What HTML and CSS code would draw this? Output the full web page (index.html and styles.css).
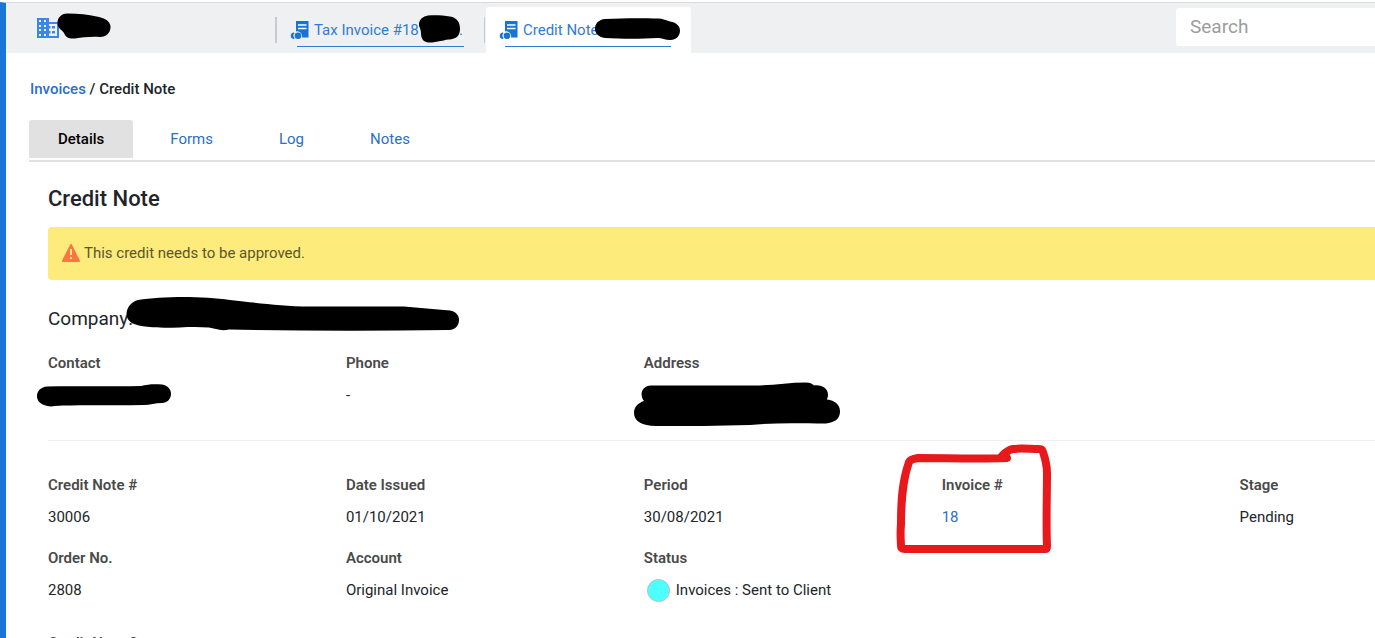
FILE: index.html
```html
<!DOCTYPE html>
<html lang="en">
<head>
    <meta charset="UTF-8">
    <meta name="viewport" content="width=device-width, initial-scale=1.0">
    <title>Credit Note</title>
    <link rel="stylesheet" href="styles.css">
</head>
<body>
    <svg width="0" height="0" class="defs" aria-hidden="true">
        <symbol id="invoice-icon" viewBox="0 0 19 19">
            <path fill="#1a73d2" d="M6 0h12.500v16.500H12a5 5 0 0 0-6-6z"/>
            <path stroke="#fff" stroke-width="1.300" d="M8 4h8.500M8 7.500h8.500"/>
            <path fill="#1a73d2" d="M3.500 11.500a3.300 3.300 0 0 0 0 6.500c.6 0 1-.3 1-1-1.500-1.500-1.500-3.500 0-4.700 0-.6-.4-.8-1-.8z"/>
            <circle cx="8" cy="14.800" r="3.300" fill="#1a73d2"/>
        </symbol>
    </svg>

    <div class="app">
        <header class="topbar">
            <a href="#" class="brand" aria-label="Company">
                <svg width="22" height="20" viewBox="0 0 22 20">
                    <path fill="#3a87e8" d="M0 0h12v4h10v16H0z"/>
                    <path fill="#eff0f2" d="M2 2h2v2H2zM7 2h2v2H7zM2 7h2v2H2zM7 7h2v2H7zM2 11h2v2H2zM7 11h2v2H7zM2 16h2v2H2zM7 16h2v2H7zM12 6h8v12h-8z"/>
                    <path fill="#3a87e8" d="M15 8h3v2.500h-3zM15 13h3v2.500h-3zM12 8h1.500v2.500H12zM12 13h1.500v2.500H12z"/>
                </svg>
                <svg class="redact redact-brand" width="54" height="27" viewBox="57 13 54 27">
                    <path d="M68 13.500C60 13 56 20 58 26c1 3 4 4 6 7 2 5 6 6 11 5.500 8-1 14-2 25-1.500 7 0 11-5 10.500-11-1-6-7-8-14-9.500-8-2-18-3-28.500-3z"/>
                </svg>
            </a>

            <nav class="open-tabs">
                <a href="#" class="open-tab">
                    <svg width="19" height="19"><use href="#invoice-icon"/></svg>
                    <span>Tax Invoice #18</span><span class="tail">.</span>
                    <svg class="redact redact-tax" width="42" height="28" viewBox="419 15 42 28">
                        <path d="M428 15.500c9-.5 15 0 22 1 7 1 10 6 10 12 0 7-3 10-10 11-5 0-9 2-18 3-8 .5-11-3-11-9 0-3-1-5-2-8-.5-5 3-9 9-10z"/>
                    </svg>
                </a>
                <a href="#" class="open-tab active">
                    <svg width="19" height="19"><use href="#invoice-icon"/></svg>
                    <span>Credit Note</span>
                    <svg class="redact redact-credit" width="86" height="24" viewBox="595 18 86 24">
                        <path d="M605 19c18-1 38-1 53-.5 5 0 8 2 12 3 7 1 10 5 10 9 0 6-5 10-10 9.500-5 0-8-2-12-2-17 1-36 1-53 0-7-1-10-5-10-9.500 0-5 4-9 10-9.500z"/>
                    </svg>
                </a>
            </nav>

            <input type="search" class="search" placeholder="Search" aria-label="Search">
        </header>

        <main>
            <div class="breadcrumb"><a href="#">Invoices</a> / Credit Note</div>

            <nav class="tabs">
                <a href="#" class="active">Details</a>
                <a href="#">Forms</a>
                <a href="#">Log</a>
                <a href="#">Notes</a>
            </nav>

            <div class="content">
                <h1>Credit Note</h1>

                <div class="alert">
                    <svg width="18" height="18" viewBox="0 0 18 18">
                        <path fill="#ff7440" stroke="#ff7440" stroke-width="2" stroke-linejoin="round" d="M9 1l8 16H1z"/>
                        <path stroke="#fdec7c" stroke-width="2" d="M9 5v6M9 13v2"/>
                    </svg>
                    This credit needs to be approved.
                </div>

                <h2>Company:
                    <svg class="redact redact-company" width="334" height="34" viewBox="126 297 334 34">
                        <path d="M138 300c25-4 65-4 92 0 28 3 50 6 80 6.500 32 0 62 0 94 0 15 1 30 3 46 4 6 1 9 5 9 9.500s-3 10-10 10c-73 1-148 1-220-.5-8 2-14-1-20-2-22-2-41 2-64-1-10-1-18-4-18.500-12 0-7 5-13 11.500-14.500z"/>
                    </svg>
                </h2>

                <dl class="fields company-fields">
                    <div class="field">
                        <dt>Contact</dt>
                        <dd>
                            <svg class="redact redact-contact" width="136" height="24" viewBox="36 383 136 24">
                                <path d="M47 386.500c30-.5 65 0 94-.5 7-2 14-2 21-1.500 6 1 9 5 9 9.500 0 5-4 9-9 9-7 0-12 2-18 2-31 1-62-.5-89 1-5 1-8 0-11-1-5-2-7-5-7-9 0-5 4-9 10-9.500z"/>
                            </svg>
                        </dd>
                    </div>
                    <div class="field">
                        <dt>Phone</dt>
                        <dd>-</dd>
                    </div>
                    <div class="field">
                        <dt>Address</dt>
                        <dd>
                            <svg class="redact redact-address" width="206" height="45" viewBox="634 382 206 45">
                                <path d="M651 385.500h104c18 0 33-3 51-3 4 0 6 1 8 3 9-1 14 4 14 9 0 3-1 4-1 5 8 1 13 5 13 12 0 8-6 11-14 12-27 0-51-1-76 1.500-32 1-62 1-94 1-14 0-22-5-22-13 0-6 4-10 10-12-5-7-2-15 7-15.500z"/>
                            </svg>
                        </dd>
                    </div>
                </dl>

                <dl class="fields">
                    <div class="field">
                        <dt>Credit Note #</dt>
                        <dd>30006</dd>
                    </div>
                    <div class="field">
                        <dt>Date Issued</dt>
                        <dd>01/10/2021</dd>
                    </div>
                    <div class="field">
                        <dt>Period</dt>
                        <dd>30/08/2021</dd>
                    </div>
                    <div class="field">
                        <dt>Invoice #</dt>
                        <dd><a href="#">18</a></dd>
                        <svg class="highlight" width="160" height="114" viewBox="894 442 160 114">
                            <path d="M1007 458c-30 1-60 0-89 0-6 1-8 2-9 4-7 20-8 40-8 62-1 10 0 19 0 22 0 2 1 3 4 3h141c1 0 1-1 1-3-1-24 0-49 0-73 0-8-2-15-4-21-1-3-2-3-5-3-8 0-17-1-25 0-6 1-8 4-12 8"/>
                        </svg>
                    </div>
                    <div class="field">
                        <dt>Stage</dt>
                        <dd>Pending</dd>
                    </div>
                    <div class="field">
                        <dt>Order No.</dt>
                        <dd>2808</dd>
                    </div>
                    <div class="field">
                        <dt>Account</dt>
                        <dd>Original Invoice</dd>
                    </div>
                    <div class="field">
                        <dt>Status</dt>
                        <dd class="status"><span class="dot"></span>Invoices : Sent to Client</dd>
                    </div>
                </dl>

                <dl class="fields comments">
                    <div class="field">
                        <dt>Credit Note Comments</dt>
                    </div>
                </dl>
            </div>
        </main>
    </div>
</body>
</html>
```
FILE: styles.css
```css
* {
    box-sizing: border-box;
}
body {
    margin: 0;
    padding-top: 2px;
    height: 100vh;
    overflow: hidden;
    font-family: Roboto, sans-serif;
    font-size: 15px;
    color: #212529;
    background: white;
}
a {
    color: #2b6fc9;
    text-decoration: none;
}
.defs {
    position: absolute;
}
.app {
    height: 100%;
    border-top: 1px solid #d8dbe0;
    border-left: 6px solid #1976d8;
    overflow: hidden;
}

/* top bar */
.topbar {
    display: flex;
    height: 50px;
    background: #eff0f2;
}
.brand {
    position: relative;
    width: 269px;
    padding: 15px 0 0 31px;
}
.open-tabs {
    display: flex;
    flex: 1;
}
.open-tab {
    position: relative;
    display: flex;
    align-items: center;
    width: 209px;
    height: 46px;
    margin-top: 4px;
    padding: 0 21px 0 15px;
    gap: 5px;
    color: #2f7cd6;
}
.open-tab::before {
    content: "";
    position: absolute;
    left: 0;
    top: 10px;
    width: 2px;
    height: 26px;
    background: #c8cacd;
}
.open-tab::after {
    content: "";
    position: absolute;
    left: 22px;
    right: 20px;
    bottom: 6px;
    border-bottom: 1px solid #2f7cd6;
}
.open-tab .tail {
    margin-left: auto;
}
.open-tab.active {
    width: 205px;
    margin-left: 2px;
    padding-left: 13px;
    background: white;
    border-radius: 3px 3px 0 0;
}
.open-tab.active::before {
    left: -2px;
    width: 1px;
}
.open-tab.active::after {
    left: 19px;
}
.search {
    width: 199px;
    height: 38px;
    margin-top: 5px;
    padding: 0 14px 2px;
    border: none;
    border-radius: 3px 0 0 3px;
    background: white;
    font-family: inherit;
    font-size: 19px;
}
.search::placeholder {
    color: #9b9da0;
}

/* page */
.breadcrumb {
    padding: 26px 24px 0;
    line-height: 20px;
    font-weight: 500;
}
.tabs {
    display: flex;
    margin: 21px 0 0 23px;
    padding-bottom: 2px;
    border-bottom: 2px solid #e0e0e0;
}
.tabs a {
    padding: 0 37px 0 29px;
    line-height: 38px;
}
.tabs a.active {
    margin-right: 8px;
    padding: 0 29px;
    border-radius: 3px 3px 0 0;
    background: #e1e1e1;
    color: black;
    font-weight: 500;
}
.content {
    padding-left: 42px;
}
h1 {
    margin: 21px 0 12px;
    font-size: 22px;
    line-height: 32px;
    font-weight: 500;
}
.alert {
    display: flex;
    align-items: center;
    gap: 4px;
    height: 53px;
    padding: 0 0 2px 14px;
    border-radius: 4px 0 0 4px;
    background: #fdec7c;
    color: #5c552c;
}
h2 {
    position: relative;
    margin: 23px 0 12px;
    font-size: 19px;
    line-height: 32px;
    font-weight: 400;
}

/* details */
.fields {
    display: grid;
    grid-template-columns: repeat(4, 2.2fr) 1fr;
    row-gap: 9px;
    margin: 0;
}
.company-fields {
    height: 94px;
    margin-bottom: 28px;
    border-bottom: 1px solid #eeeeee;
}
.comments {
    margin-top: 21px;
}
.field {
    position: relative;
}
dt,
dd {
    margin: 0;
    line-height: 32px;
    white-space: nowrap;
}
dt {
    color: #4a4a4a;
    font-weight: 600;
}
.status {
    display: flex;
    align-items: center;
}
.dot {
    width: 23px;
    height: 23px;
    margin: 0 6px 0 3px;
    border: 1px solid #a9c4c8;
    border-radius: 50%;
    background: #4dffff;
}

/* marker strokes over the details */
.redact,
.highlight {
    position: absolute;
    fill: black;
}
.redact-brand {
    left: 51px;
    top: 10px;
}
.redact-tax {
    left: 144px;
    top: 8px;
}
.redact-credit {
    left: 109px;
    top: 11px;
}
.redact-company {
    left: 78px;
    top: -6px;
}
.redact-contact {
    left: -12px;
    top: 36px;
}
.redact-address {
    left: -10px;
    top: 35px;
}
.highlight {
    left: -48px;
    top: -27px;
    fill: none;
    stroke: #e8191c;
    stroke-width: 8px;
    stroke-linecap: round;
    stroke-linejoin: round;
}
```
